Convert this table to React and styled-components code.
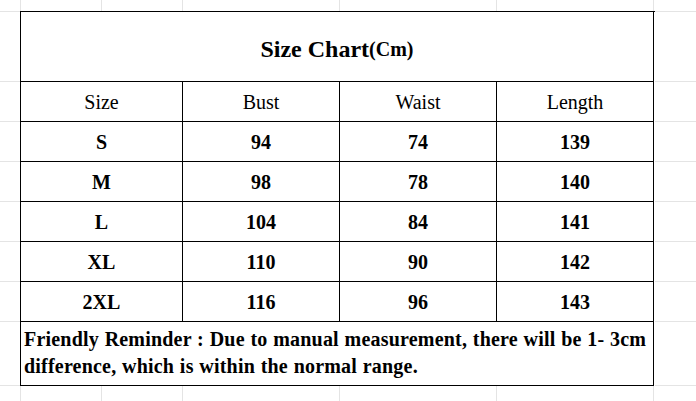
import React from "react";
import styled, { createGlobalStyle } from "styled-components";

const GlobalStyle = createGlobalStyle`
  html, body {
    margin: 0;
    padding: 0;
    background: #ffffff;
  }
  body {
    font-family: "Liberation Serif", "Times New Roman", serif;
    color: #000;
  }
`;

const gridX = [20, 101, 182, 339, 496, 653];
const gridY = [11, 81, 121, 161, 201, 241, 281, 321, 385];
const gridColor = "#e4e4e4";

const gridImages = [
  ...gridX.map(() => `linear-gradient(${gridColor}, ${gridColor})`),
  ...gridY.map(() => `linear-gradient(${gridColor}, ${gridColor})`),
].join(", ");
const gridPositions = [
  ...gridX.map((x) => `${x}px 0`),
  ...gridY.map((y) => `0 ${y}px`),
].join(", ");
const gridSizes = [
  ...gridX.map(() => `1px 100%`),
  ...gridY.map(() => `100% 1px`),
].join(", ");

const Sheet = styled.div`
  width: 696px;
  height: 401px;
  box-sizing: border-box;
  padding: 11px 0 0 20px;
  overflow: hidden;
  background-color: #fff;
  background-image: ${gridImages};
  background-position: ${gridPositions};
  background-size: ${gridSizes};
  background-repeat: no-repeat;
`;

const Chart = styled.div`
  display: grid;
  grid-template-columns: 162px 157px 157px 157px;
  grid-template-rows: 70px repeat(6, 40px) 64px;
  width: 634px;
  border-left: 1px solid #000;
  border-top: 1px solid #000;
  background: #fff;
`;

const Cell = styled.div`
  box-sizing: border-box;
  border-right: 1px solid #000;
  border-bottom: 1px solid #000;
  display: flex;
  align-items: center;
  justify-content: center;
  font-size: 20px;
  font-weight: ${(p) => (p.$bold ? 700 : 400)};
  line-height: 1;
  padding-top: 1px;
`;

const TitleCell = styled(Cell)`
  grid-column: 1 / -1;
  font-size: 24px;
  font-weight: 700;
  padding-top: 5px;
`;

const TitleUnit = styled.span`
  font-size: 20px;
`;

const ReminderCell = styled(Cell)`
  grid-column: 1 / -1;
  justify-content: flex-start;
  padding: 0 0 1px 3px;
  font-weight: 700;
  line-height: 27px;
  white-space: nowrap;
  letter-spacing: 0.2px;
  word-spacing: 0.5px;
`;

const ReminderText = styled.p`
  margin: 0;
`;

const headers = ["Size", "Bust", "Waist", "Length"];
const rows = [
  ["S", "94", "74", "139"],
  ["M", "98", "78", "140"],
  ["L", "104", "84", "141"],
  ["XL", "110", "90", "142"],
  ["2XL", "116", "96", "143"],
];

export default function App() {
  return (
    <>
      <GlobalStyle />
      <Sheet>
        <Chart>
          <TitleCell>
            Size Chart<TitleUnit>(Cm)</TitleUnit>
          </TitleCell>
          {headers.map((h) => (
            <Cell key={h}>{h}</Cell>
          ))}
          {rows.map((r) =>
            r.map((v, i) => (
              <Cell key={r[0] + i} $bold>
                {v}
              </Cell>
            ))
          )}
          <ReminderCell>
            <ReminderText>
              Friendly Reminder : Due to manual measurement, there will be 1- 3cm
              <br />
              difference, which is within the normal range.
            </ReminderText>
          </ReminderCell>
        </Chart>
      </Sheet>
    </>
  );
}
